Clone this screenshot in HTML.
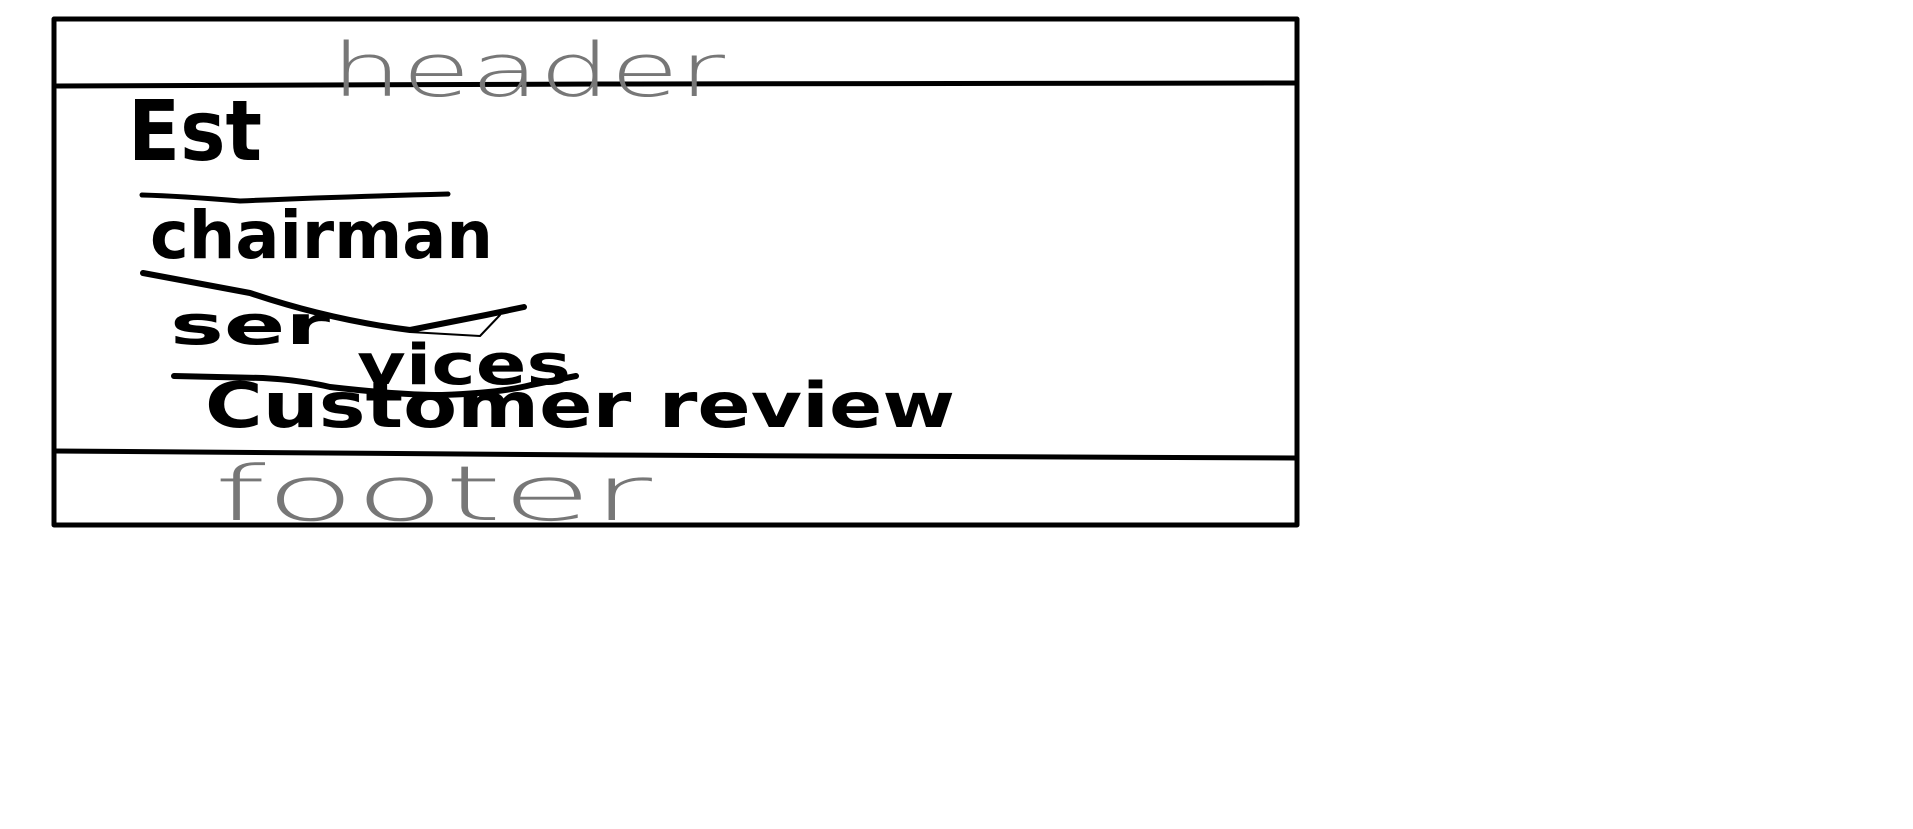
<!DOCTYPE html>
<html><head><meta charset="utf-8"><style>
html,body{margin:0;padding:0;background:#fff;width:1913px;height:829px;overflow:hidden}
svg{display:block}
.b{font-family:"DejaVu Sans","Liberation Sans",sans-serif;font-weight:bold;fill:#000}
.t{font-family:"DejaVu Sans","Liberation Sans",sans-serif;font-weight:200;fill:#777}
</style></head><body>
<svg width="1913" height="829" viewBox="0 0 1913 829" xmlns="http://www.w3.org/2000/svg">
<g fill="none" stroke="#000" stroke-linecap="round" stroke-linejoin="round">
<rect x="54" y="19" width="1243" height="506" stroke-width="5"/>
<path d="M57 86 L600 84 L1297 83" stroke-width="5"/>
<path d="M54 451 L600 455 L1297 458" stroke-width="5"/>
<path d="M142 195 Q180 196 240 201 Q330 197 448 194" stroke-width="5"/>
<path d="M143 273 L250 293 Q330 320 410 330 Q460 320 486 315 L524 307" stroke-width="6"/>
<path d="M410 332 L480 336 L500 315" stroke-width="2"/>
<path d="M174 376 L263 378 Q300 380 330 387 Q400 395 442 395 Q500 393 531 385 L576 376" stroke-width="6"/>
</g>
<text class="t" x="331" y="96" font-size="74" textLength="394" lengthAdjust="spacingAndGlyphs">header</text>
<text class="b" x="128" y="160" font-size="84" textLength="134" lengthAdjust="spacingAndGlyphs">Est</text>
<text class="b" x="150" y="258" font-size="66" textLength="343" lengthAdjust="spacingAndGlyphs">chairman</text>
<text class="b" x="170" y="344" font-size="54" textLength="160" lengthAdjust="spacingAndGlyphs">ser</text>
<text class="b" x="357" y="384" font-size="56" textLength="214" lengthAdjust="spacingAndGlyphs">vices</text>
<text class="b" x="205" y="427" font-size="62" textLength="750" lengthAdjust="spacingAndGlyphs">Customer review</text>
<text class="t" x="214" y="520" font-size="76" textLength="438" lengthAdjust="spacingAndGlyphs">footer</text>
</svg>
</body></html>
